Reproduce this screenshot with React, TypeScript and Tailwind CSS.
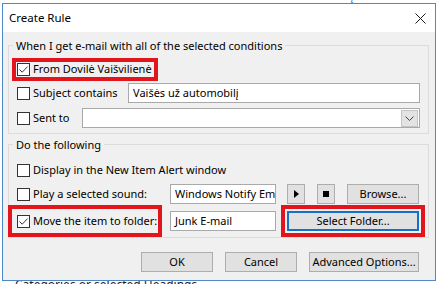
import React from 'react';

type CheckProps = {
  checked?: boolean;
  label: string;
};

const CheckBox: React.FC<{ checked?: boolean }> = ({ checked }) => (
  <span className="flex h-[13px] w-[13px] shrink-0 items-center justify-center border border-[#333333] bg-white">
    {checked && (
      <svg width="11" height="11" viewBox="0 0 11 11">
        <path d="M1.5 5.5 L4.2 8.2 L9.6 2.6" fill="none" stroke="#333333" strokeWidth="1" />
      </svg>
    )}
  </span>
);

const CheckLabel: React.FC<CheckProps> = ({ checked, label }) => (
  <span className="flex items-center whitespace-nowrap">
    <CheckBox checked={checked} />
    <span className="ml-[3px]">{label}</span>
  </span>
);

const TextBox: React.FC<{ value?: string; className?: string }> = ({ value, className }) => (
  <div className={`flex h-[20px] items-center overflow-hidden whitespace-nowrap border border-[#a9a9a9] bg-white pl-[4px] ${className ?? ''}`}>
    {value}
  </div>
);

const Button: React.FC<{ className?: string; children?: React.ReactNode }> = ({ className, children }) => (
  <button
    type="button"
    className={`flex h-[20px] shrink-0 items-center justify-center border border-[#adadad] bg-[#e1e1e1] text-black ${className ?? ''}`}
  >
    {children}
  </button>
);

const GroupBox: React.FC<{ title: string; className?: string; children?: React.ReactNode }> = ({ title, className, children }) => (
  <div className={`border border-[#dcdcdc] px-[8px] ${className ?? ''}`}>
    <div className="-mt-[8px] -ml-[4px] w-fit bg-[#f0f0f0] px-[3px] leading-[16px]">{title}</div>
    {children}
  </div>
);

export default function App() {
  return (
    <div className="flex h-[284px] w-[439px] flex-col overflow-hidden bg-white font-['Noto_Sans',sans-serif] text-[11px] text-black">
      {/* window behind, top edge */}
      <div className="h-[3px] shrink-0 overflow-hidden">
        <div className="-mt-[11px] ml-[95px] whitespace-nowrap leading-[14px] text-[#3a67b0]">
          Nuo: Dovilė Vaišvilienė Tema: Vaišės už automobilį
        </div>
      </div>

      <div className="ml-[2px] flex h-[278px] w-[434px] shrink-0 flex-col border border-[#4f88c6]">
        {/* title bar */}
        <div className="flex h-[28px] shrink-0 items-center justify-between bg-white pl-[6px] pr-[9px]">
          <span className="text-[11.5px]">Create Rule</span>
          <svg width="11" height="11" viewBox="0 0 11 11">
            <path d="M0.5 0.5 L10.5 10.5 M10.5 0.5 L0.5 10.5" stroke="#1a1a1a" strokeWidth="1" />
          </svg>
        </div>

        {/* body */}
        <div className="flex flex-1 flex-col bg-[#f0f0f0] pl-[5px] pr-[6px] pt-[13px]">
          <GroupBox title="When I get e-mail with all of the selected conditions" className="pb-[5px]">
            <div className="mt-[5px] flex h-[20px] items-center">
              <div className="-ml-[5px] flex h-[23px] items-center border-[4px] border-[#e3141c] pl-[1px] pr-[2px]">
                <CheckLabel checked label="From Dovilė Vaišvilienė" />
              </div>
            </div>
            <div className="mt-[4px] flex h-[20px] items-center">
              <div className="w-[111px] shrink-0">
                <CheckLabel label="Subject contains" />
              </div>
              <TextBox value="Vaišės už automobilį" className="flex-1" />
            </div>
            <div className="mt-[5px] flex h-[20px] items-center">
              <div className="w-[65px] shrink-0">
                <CheckLabel label="Sent to" />
              </div>
              <div className="flex h-[20px] flex-1 items-center justify-end border border-[#a9a9a9] bg-white pr-[1px]">
                <div className="flex h-[17px] w-[17px] items-center justify-center border border-[#c4c4c4] bg-[#e3e3e3]">
                  <svg width="9" height="5" viewBox="0 0 9 5">
                    <path d="M0.5 0.5 L4.5 4.5 L8.5 0.5" fill="none" stroke="#444444" strokeWidth="1" />
                  </svg>
                </div>
              </div>
            </div>
          </GroupBox>

          <GroupBox title="Do the following" className="mt-[10px] pb-[6px]">
            <div className="mt-[7px] flex h-[20px] items-center">
              <CheckLabel label="Display in the New Item Alert window" />
            </div>
            <div className="mt-[4px] flex h-[20px] items-center">
              <div className="w-[153px] shrink-0">
                <CheckLabel label="Play a selected sound:" />
              </div>
              <TextBox value="Windows Notify Em" className="w-[106px] shrink-0" />
              <Button className="ml-[11px] w-[18px]">
                <svg width="5" height="8" viewBox="0 0 5 8">
                  <path d="M0 0 L5 4 L0 8 Z" fill="#000000" />
                </svg>
              </Button>
              <Button className="ml-[12px] w-[18px]">
                <span className="h-[6px] w-[6px] bg-black" />
              </Button>
              <Button className="ml-[12px] w-[72px]">Browse...</Button>
            </div>
            <div className="mt-[7px] flex h-[20px] items-center">
              <div className="w-[153px] shrink-0">
                <div className="-ml-[9px] flex h-[32px] w-[154px] items-center border-[4px] border-[#e3141c] pl-[5px]">
                  <CheckLabel checked label="Move the item to folder:" />
                </div>
              </div>
              <TextBox value="Junk E-mail" className="w-[106px] shrink-0" />
              <div className="ml-[5px] flex h-[32px] items-center border-[4px] border-[#e3141c] p-[2px]">
                <button
                  type="button"
                  className="flex h-[20px] w-[132px] items-center justify-center border-2 border-[#1670c9] bg-[#e1e1e1]"
                >
                  Select Folder...
                </button>
              </div>
            </div>
          </GroupBox>

          <div className="mt-[14px] flex justify-end gap-[12px] pr-[10px]">
            <Button className="w-[72px]">OK</Button>
            <Button className="w-[72px]">Cancel</Button>
            <Button className="w-[110px]">Advanced Options...</Button>
          </div>
        </div>
      </div>

      {/* window behind, bottom edge */}
      <div className="h-[3px] shrink-0 overflow-hidden">
        <div className="-mt-[4px] ml-[15px] whitespace-nowrap text-[12px] leading-[16px] text-[#222222]">
          Categories or selected Headings
        </div>
      </div>
    </div>
  );
}
